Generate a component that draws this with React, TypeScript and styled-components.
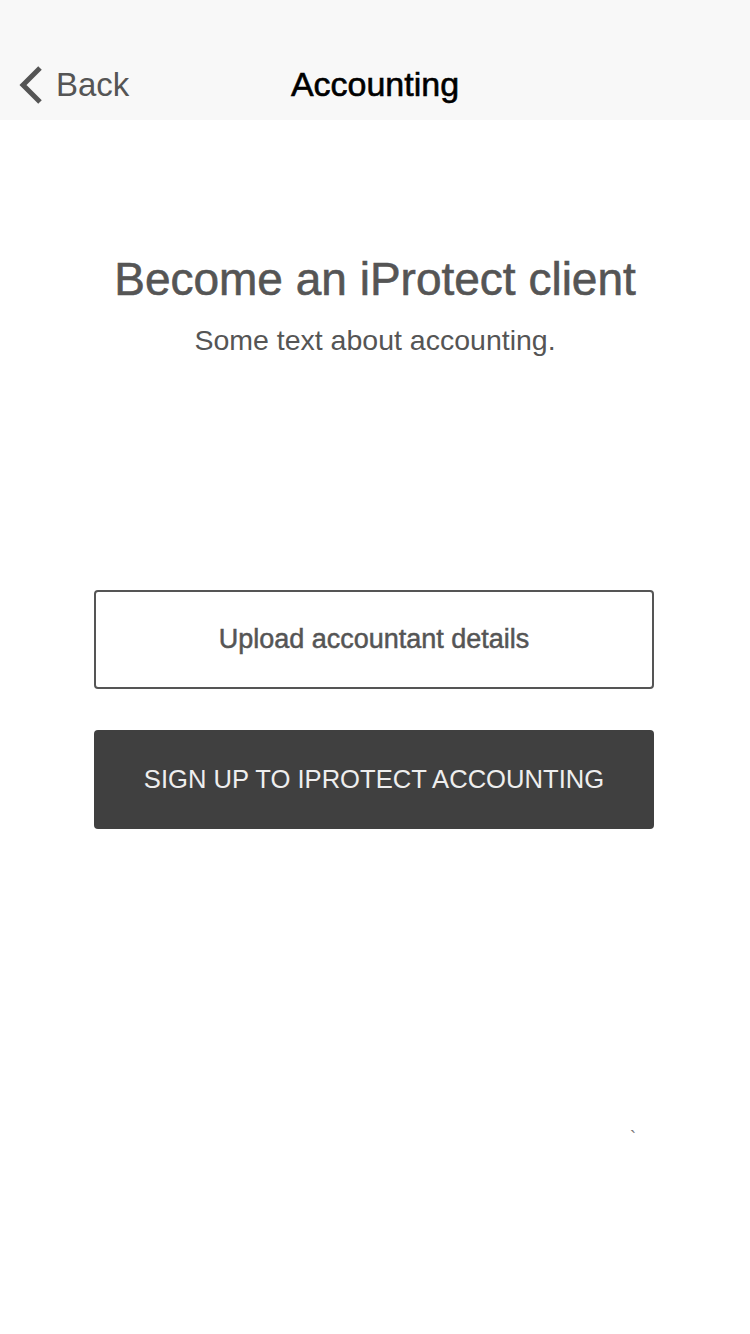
import styled, { createGlobalStyle } from 'styled-components';

const GlobalStyle = createGlobalStyle`
    html, body {
        margin: 0;
        padding: 0;
        background: #ffffff;
        font-family: "Liberation Sans", Arial, sans-serif;
    }
`

const Screen = styled.div`
    width: 750px;
    height: 1334px;
    display: flex;
    flex-direction: column;
    background: #ffffff;
`

const NavBar = styled.header`
    height: 120px;
    background: #f8f8f8;
    display: grid;
    grid-template-columns: 1fr auto 1fr;
    align-items: end;
    padding: 0 0 16px 0;
    box-sizing: border-box;
`

const BackButton = styled.div`
    display: flex;
    align-items: center;
    gap: 12px;
    padding-left: 18px;
    margin-bottom: -1px;
    color: #555555;
    font-size: 33px;
    line-height: 40px;
`

const Title = styled.h1`
    margin: 0;
    font-size: 34px;
    font-weight: 400;
    -webkit-text-stroke: 0.6px #000000;
    color: #000000;
    line-height: 40px;
`

const Intro = styled.section`
    display: flex;
    flex-direction: column;
    align-items: center;
    padding-top: 133px;
    color: #555555;
`

const Heading = styled.h2`
    margin: 0;
    font-size: 46px;
    font-weight: 400;
    -webkit-text-stroke: 0.6px #555555;
    line-height: 52px;
`

const Subtitle = styled.p`
    margin: 18px 0 0;
    font-size: 28.5px;
    line-height: 34px;
`

const Actions = styled.div`
    display: flex;
    flex-direction: column;
    gap: 41px;
    padding: 233px 96px 0 94px;
`

const Button = styled.button<{ $dark?: boolean }>`
    height: 99px;
    border-radius: 4px;
    box-sizing: border-box;
    font-family: inherit;
    font-size: ${p => (p.$dark ? '25.6px' : '27px')};
    border: ${p => (p.$dark ? 'none' : '2px solid #555555')};
    background: ${p => (p.$dark ? '#404040' : '#ffffff')};
    color: ${p => (p.$dark ? '#eeeeee' : '#555555')};
    font-weight: 400;
    -webkit-text-stroke: ${p => (p.$dark ? '0' : '0.5px #555555')};
    text-transform: ${p => (p.$dark ? 'uppercase' : 'none')};
    display: flex;
    align-items: center;
    justify-content: center;
`

const Stray = styled.div`
    display: flex;
    justify-content: flex-end;
    padding: 299px 114px 0 0;
    color: #777777;
    font-size: 18px;
    line-height: 20px;
`

export default function App(){
    return(
        <Screen>
            <GlobalStyle />
            <NavBar>
                <BackButton>
                    <svg width="26" height="40" viewBox="0 0 26 40">
                        <path d="M22 3 L5 20 L22 37" fill="none" stroke="#555555" strokeWidth="5" strokeLinecap="butt" strokeLinejoin="miter" />
                    </svg>
                    <span>Back</span>
                </BackButton>
                <Title>Accounting</Title>
                <div />
            </NavBar>
            <Intro>
                <Heading>Become an iProtect client</Heading>
                <Subtitle>Some text about accounting.</Subtitle>
            </Intro>
            <Actions>
                <Button>Upload accountant details</Button>
                <Button $dark>Sign up to iProtect accounting</Button>
            </Actions>
            <Stray>`</Stray>
        </Screen>
    )
}
